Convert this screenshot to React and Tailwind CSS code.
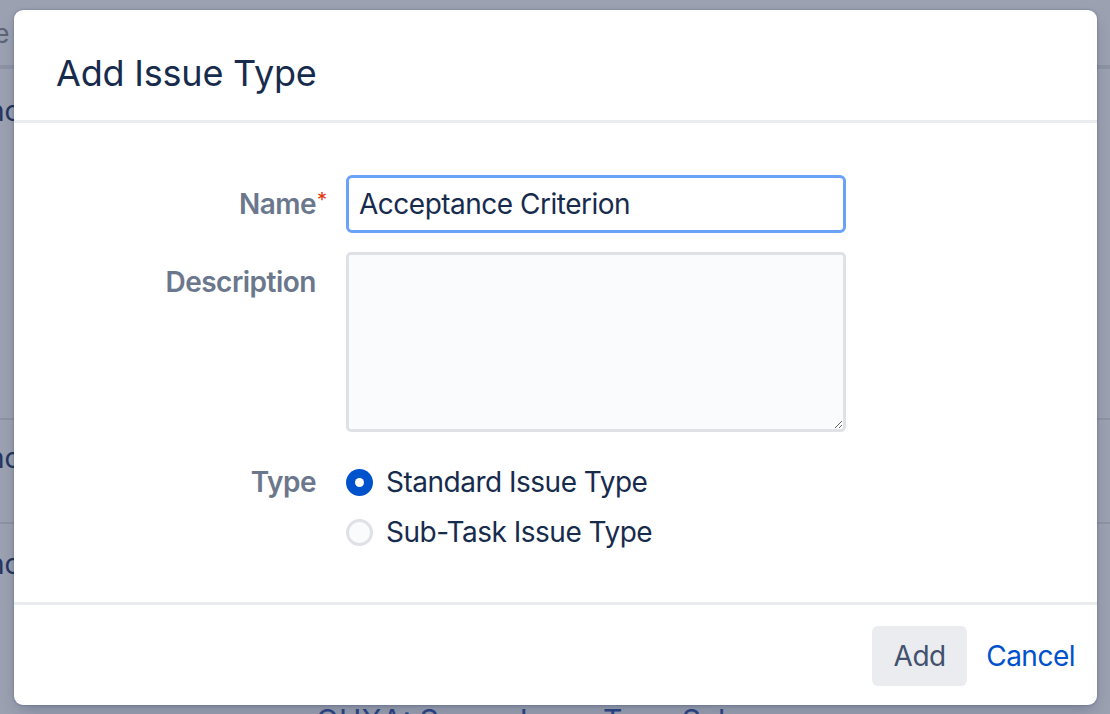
import React, { useState } from 'react';

const font = { fontFamily: 'Inter, "Noto Sans", sans-serif' };

const Radio = ({ checked, label, onSelect }) => (
  <label className="flex items-center cursor-pointer" onClick={onSelect}>
    {checked ? (
      <span className="w-[27px] h-[27px] rounded-full bg-[#0052cc] flex items-center justify-center">
        <span className="w-[9px] h-[9px] rounded-full bg-white" />
      </span>
    ) : (
      <span className="w-[27px] h-[27px] rounded-full bg-[#fafbfc] border-[3px] border-[#dfe1e6]" />
    )}
    <span className="ml-[13px] text-[28px] leading-[36px] tracking-[-0.5px] text-[#172b4d]">{label}</span>
  </label>
);

const AddIssueTypeDialog = () => {
  const [name, setName] = useState('Acceptance Criterion');
  const [type, setType] = useState('standard');

  return (
    <div className="absolute left-[14px] top-[10px] w-[1083px] h-[695px] bg-white rounded-[9px] shadow-[0_0_3px_rgba(9,30,66,0.3),0_8px_16px_-4px_rgba(9,30,66,0.25)] flex flex-col overflow-hidden">
      <div className="h-[110px] shrink-0 flex items-center px-[42px] pt-[16px]">
        <h2 className="text-[36px] leading-[44px] font-normal text-[#172b4d] tracking-[-0.2px]">Add Issue Type</h2>
      </div>
      <div className="h-[3px] bg-[#ebecf0] shrink-0" />

      <div className="flex-1 pt-[52px]">
        <div className="flex items-center">
          <div className="w-[302px] text-right text-[28px] font-semibold tracking-[-0.5px] text-[#6b778c] relative">
            Name
            <span className="absolute left-[303px] top-[2px] text-[#de350b] font-normal text-[20px]">*</span>
          </div>
          <input
            value={name}
            onChange={(e) => setName(e.target.value)}
            className="ml-[30px] w-[500px] h-[58px] border-[3px] border-[#6aa2f8] rounded-[6px] px-[10px] text-[28px] tracking-[-0.5px] text-[#172b4d] outline-none bg-white"
          />
        </div>

        <div className="flex items-start mt-[19px]">
          <div className="w-[302px] text-right text-[28px] leading-[36px] font-semibold tracking-[-0.5px] text-[#6b778c] pt-[12px]">Description</div>
          <textarea className="ml-[30px] w-[500px] h-[180px] border-[3px] border-[#dfe1e6] rounded-[5px] bg-[#fafbfc] outline-none p-[10px] text-[28px]" />
        </div>

        <div className="flex items-start mt-[33px]">
          <div className="w-[302px] text-right text-[28px] leading-[36px] font-semibold tracking-[-0.5px] text-[#6b778c] -mt-[1px]">Type</div>
          <div className="ml-[30px] flex flex-col gap-[14px] -mt-[1px]">
            <Radio checked={type === 'standard'} label="Standard Issue Type" onSelect={() => setType('standard')} />
            <Radio checked={type === 'subtask'} label="Sub-Task Issue Type" onSelect={() => setType('subtask')} />
          </div>
        </div>
      </div>

      <div className="h-[3px] bg-[#ebecf0] shrink-0" />
      <div className="h-[100px] shrink-0 flex items-start justify-end pt-[21px] pr-[22px]">
        <button className="w-[95px] h-[60px] rounded-[6px] bg-[#ebecf0] text-[28px] tracking-[-0.5px] text-[#42526e]">Add</button>
        <button className="ml-[19px] h-[60px] text-[28px] tracking-[-0.5px] text-[#0052cc]">Cancel</button>
      </div>
    </div>
  );
};

const App = () => {
  return (
    <div className="relative w-[1110px] h-[714px] overflow-hidden bg-[#9ca1b1]" style={font}>
      {/* page behind the blanket */}
      <div className="h-[65px] pt-[20px] text-[26px] leading-[28px] text-[#5c6478]">
        <div className="-ml-[12px]">le</div>
      </div>
      <div className="h-[4px] bg-[#8d93a3]" />
      <div className="h-[349px] pt-[24px] text-[28px] leading-[36px] text-[#26355e]">
        <div className="-ml-[12px]">nc</div>
      </div>
      <div className="h-[2px] bg-[#8d93a3]" />
      <div className="h-[102px] pt-[20px] text-[28px] leading-[36px] text-[#26355e]">
        <div className="-ml-[12px]">nc</div>
      </div>
      <div className="h-[2px] bg-[#8d93a3]" />
      <div className="h-[180px] pt-[22px] text-[28px] leading-[36px] text-[#26355e]">
        <div className="-ml-[12px]">nc</div>
      </div>
      <div className="pl-[316px] -mt-[2px] text-[30px] leading-[36px] text-[#2f4486]">OUXA: Scrum Issue Type Scheme</div>

      <AddIssueTypeDialog />
    </div>
  );
};

export default App;
